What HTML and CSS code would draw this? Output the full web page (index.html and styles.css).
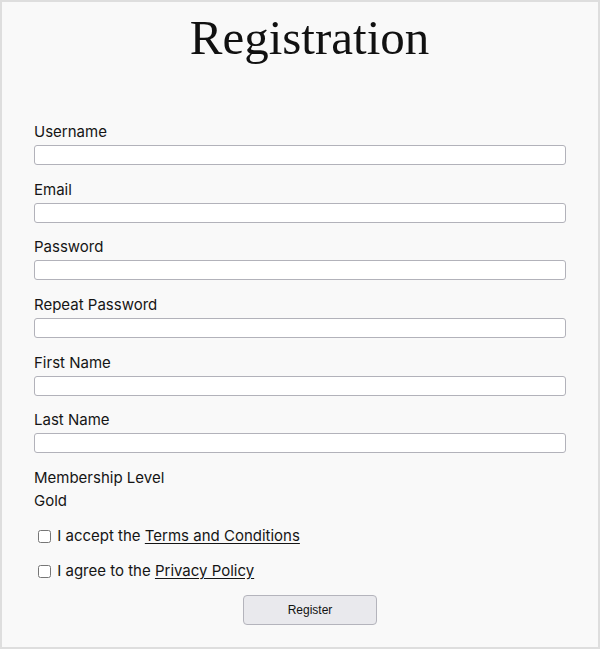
FILE: index.html
```html
<!DOCTYPE html>
<html lang="en">
<head>
<meta charset="utf-8">
<title>Registration</title>
<link rel="stylesheet" href="styles.css">
</head>
<body>
<div class="page">
  <h1 class="title">Registration</h1>
  <form class="form">
    <div class="field">
      <label class="label" for="username">Username</label>
      <input class="input" id="username" type="text">
    </div>
    <div class="field">
      <label class="label" for="email">Email</label>
      <input class="input" id="email" type="email">
    </div>
    <div class="field">
      <label class="label" for="password">Password</label>
      <input class="input" id="password" type="password">
    </div>
    <div class="field">
      <label class="label" for="repeat">Repeat Password</label>
      <input class="input" id="repeat" type="password">
    </div>
    <div class="field">
      <label class="label" for="first">First Name</label>
      <input class="input" id="first" type="text">
    </div>
    <div class="field">
      <label class="label" for="last">Last Name</label>
      <input class="input" id="last" type="text">
    </div>
    <div class="membership">
      <div class="label">Membership Level</div>
      <div class="value">Gold</div>
    </div>
    <label class="check first-check"><input class="box" type="checkbox"> I accept the <a class="link" href="#">Terms and Conditions</a></label>
    <label class="check"><input class="box" type="checkbox"> I agree to the <a class="link" href="#">Privacy Policy</a></label>
    <div class="actions">
      <button class="button" type="button">Register</button>
    </div>
  </form>
</div>
</body>
</html>
```

FILE: styles.css
```css
html, body {
  margin: 0;
  padding: 0;
}

body {
  background: #f9f9f9;
}

.page {
  box-sizing: border-box;
  width: 600px;
  height: 649px;
  border: 2px solid #dedede;
  background: #f9f9f9;
  padding: 8px 32px 0;
  font-family: Inter, "Noto Sans", sans-serif;
  color: #151515;
  overflow: hidden;
}

.title {
  margin: 0;
  padding-left: 19px;
  font-family: "Liberation Serif", "Times New Roman", serif;
  font-weight: normal;
  font-size: 49px;
  line-height: 56px;
  text-align: center;
  color: #111;
}

.form {
  margin-top: 57px;
}

.field {
  margin-bottom: 15.7px;
}

.label {
  display: block;
  font-size: 15px;
  line-height: 18px;
  margin-bottom: 4px;
}

.input {
  display: block;
  box-sizing: border-box;
  width: 100%;
  height: 20px;
  margin: 0;
  border: 1px solid #b2b2ba;
  border-radius: 3px;
  background: #fff;
  padding: 0 4px;
}

.membership .label {
  margin-bottom: 5px;
}

.value {
  font-size: 15px;
  line-height: 18px;
}

.check {
  display: flex;
  align-items: center;
  height: 18px;
  font-size: 15px;
  line-height: 18px;
  margin-top: 17px;
  white-space: pre;
}

.first-check {
  margin-top: 17px;
}

.box {
  width: 13px;
  height: 13px;
  margin: 0 2px 0 4px;
}

.link {
  color: #151515;
  text-decoration: underline;
  text-underline-offset: 2px;
}

.actions {
  margin-top: 15px;
}

.button {
  display: block;
  box-sizing: border-box;
  width: 134px;
  height: 30px;
  margin: 0 0 0 209px;
  border: 1px solid #b4b4bc;
  border-radius: 4px;
  background: #e9e9ed;
  font-family: "Liberation Sans", Arial, sans-serif;
  font-size: 12px;
  color: #111;
}
```
